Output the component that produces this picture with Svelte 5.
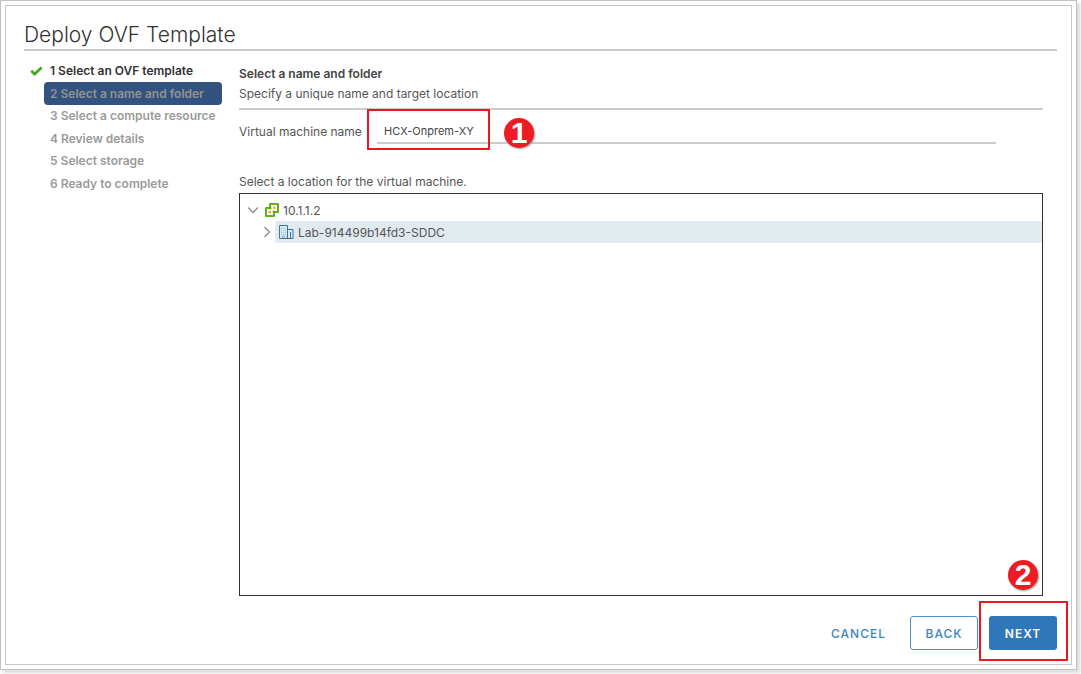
<script lang="ts">
  type Step = { label: string; state: 'done' | 'current' | 'todo' };

  const steps: Step[] = [
    { label: '1 Select an OVF template', state: 'done' },
    { label: '2 Select a name and folder', state: 'current' },
    { label: '3 Select a compute resource', state: 'todo' },
    { label: '4 Review details', state: 'todo' },
    { label: '5 Select storage', state: 'todo' },
    { label: '6 Ready to complete', state: 'todo' },
  ];

  let vmName = $state('HCX-Onprem-XY');
</script>

<div class="frame">
  <div class="wizard">
    <h1>Deploy OVF Template</h1>

    <div class="body">
      <ol class="steps">
        {#each steps as step}
          <li class={step.state} aria-current={step.state === 'current' ? 'step' : undefined}>
            <span class="mark">
              {#if step.state === 'done'}
                <svg width="13" height="10" viewBox="0 0 13 10" fill="none" aria-hidden="true">
                  <path d="M1.2 4.8l3.4 3.2 7-6.6" stroke="#48a81c" stroke-width="2.8" />
                </svg>
              {/if}
            </span>
            <span class="step-label">{step.label}</span>
          </li>
        {/each}
      </ol>

      <main>
        <h2>Select a name and folder</h2>
        <p class="subtitle">Specify a unique name and target location</p>

        <div class="name-row">
          <label for="vm-name">Virtual machine name</label>
          <div class="name-field">
            <input id="vm-name" type="text" bind:value={vmName} />
            <span class="highlight"></span>
            <span class="badge">1</span>
          </div>
        </div>

        <p class="location">Select a location for the virtual machine.</p>
        <div class="tree" role="tree">
          <div class="node" role="treeitem" aria-selected="false" aria-expanded="true">
            <button class="caret" aria-label="Collapse">
              <svg width="12" height="8" viewBox="0 0 12 8" fill="none">
                <path d="M1 1.5l5 5 5-5" stroke="#8c8c8c" stroke-width="1.3" />
              </svg>
            </button>
            <div class="node-label">
              <svg width="14" height="14" viewBox="0 0 14 14" fill="none" aria-hidden="true">
                <path d="M5 1h8v8H9v4H1V5h4z" fill="#fff" stroke="#62b01e" stroke-width="2" stroke-linejoin="round" />
                <path d="M5 5v1.500M5 5h1.500M9 9V7.500M9 9H7.500" stroke="#62b01e" stroke-width="1.500" />
                <path d="M8 3.500h2.500V6H8zM3.500 8H6v2.500H3.500z" fill="#f7a928" />
              </svg>
              <span>10.1.1.2</span>
            </div>
          </div>
          <div class="node child" role="treeitem" aria-selected="true" aria-expanded="false">
            <button class="caret" aria-label="Expand">
              <svg width="8" height="12" viewBox="0 0 8 12" fill="none">
                <path d="M1.500 1l5 5-5 5" stroke="#8c8c8c" stroke-width="1.3" />
              </svg>
            </button>
            <div class="node-label selected">
              <svg width="15" height="14" viewBox="0 0 15 14" fill="none" aria-hidden="true">
                <path d="M.5 13.500V.5h8v13M8.500 4.500h5.500v9H.5" fill="#dbe7ee" stroke="#39749c" />
                <path d="M2 3.500h5.500M2 5.500h5.500M2 7.500h5.500M2 9.500h5.500" stroke="#a9c3d3" stroke-dasharray="1 1" />
                <path d="M3.500 13v-2h2v2" stroke="#8fb1c6" />
                <path d="M11.500 7v6.500" stroke="#39749c" />
              </svg>
              <span>Lab-914499b14fd3-SDDC</span>
            </div>
          </div>
        </div>
      </main>
    </div>

    <footer>
      <button class="btn link">CANCEL</button>
      <button class="btn outline">BACK</button>
      <div class="next">
        <button class="btn primary">NEXT</button>
        <span class="highlight"></span>
        <span class="badge">2</span>
      </div>
    </footer>
  </div>
</div>

<style>
  :global(body) {
    margin: 0;
    background: #fff;
  }

  .frame {
    box-sizing: border-box;
    display: flex;
    min-height: calc(100vh - 4px);
    margin: 0 4px 4px 0;
    padding: 4px;
    border: 1px solid #c2c2c2;
    box-shadow: 3px 3px 3px #ddd;
    font-family: Inter, 'Open Sans', sans-serif;
    font-size: 12px;
    color: #565656;
  }

  .wizard {
    flex: 1;
    display: flex;
    flex-direction: column;
    padding: 14px 14px 14px 18px;
    border: 1px solid #c8c8c8;
  }

  h1 {
    margin: 0;
    border-bottom: 2px solid #ccc;
    font-size: 21px;
    font-weight: 300;
    line-height: 29px;
    color: #333;
  }

  .body {
    flex: 1;
    display: flex;
    gap: 17px;
    padding-right: 14px;
  }

  .steps {
    flex: none;
    width: 198px;
    margin: 0;
    padding: 9px 0 0;
    list-style: none;
    font-weight: 600;
    color: #9a9a9a;
  }

  .steps li {
    display: flex;
    align-items: center;
    height: 22px;
  }

  .steps li:nth-child(even) {
    height: 23px;
  }

  .mark {
    display: flex;
    width: 14px;
    padding-left: 6px;
  }

  .step-label {
    flex: 1;
    padding-left: 6px;
    line-height: 22px;
    white-space: nowrap;
  }

  .done .step-label {
    color: #333;
  }

  .current .step-label {
    border-radius: 4px;
    background: #32537f;
    line-height: 23px;
    color: #929292;
  }

  main {
    flex: 1;
    display: flex;
    flex-direction: column;
    min-width: 0;
  }

  h2 {
    margin: 13px 0 0;
    font-size: 12px;
    font-weight: 600;
    line-height: 20px;
    color: #444;
  }

  .subtitle {
    margin: 0;
    padding-bottom: 4px;
    border-bottom: 2px solid #ccc;
    line-height: 20px;
  }

  .name-row {
    display: flex;
    align-items: center;
    padding: 10px 47px 0 0;
  }

  .name-row label {
    width: 138px;
    line-height: 24px;
  }

  .name-field {
    position: relative;
    flex: 1;
  }

  input {
    display: block;
    box-sizing: border-box;
    width: 100%;
    height: 24px;
    padding: 0 7px;
    border: 0;
    border-bottom: 2px solid #ccc;
    outline: none;
    background: transparent;
    font: inherit;
    font-size: 11px;
    color: #444;
  }

  .location {
    margin: 28px 0 1px;
    line-height: 20px;
  }

  .tree {
    flex: 1;
    border: 1px solid #333;
    padding-top: 5px;
  }

  .node {
    display: flex;
    align-items: center;
    height: 22px;
    padding-left: 5px;
  }

  .node.child {
    padding-left: 19px;
  }

  .caret {
    display: flex;
    align-items: center;
    justify-content: center;
    width: 16px;
    height: 22px;
    padding: 0;
    border: 0;
    background: none;
  }

  .node-label {
    flex: 1;
    display: flex;
    align-items: center;
    gap: 4px;
    height: 22px;
    padding-left: 4px;
  }

  .node-label.selected {
    border-radius: 3px 0 0 3px;
    background: #e1eaef;
  }

  footer {
    display: flex;
    justify-content: flex-end;
    gap: 11px;
    padding-top: 20px;
  }

  .btn {
    box-sizing: border-box;
    height: 34px;
    min-width: 68px;
    padding: 0 12px;
    border: 1px solid transparent;
    border-radius: 3px;
    background: none;
    font: 500 12px Inter, 'Open Sans', sans-serif;
    letter-spacing: 1px;
    color: #3a87be;
  }

  .outline {
    border-color: #4a94c8;
  }

  .primary {
    background: #3077b9;
    color: #fff;
    font-weight: 600;
  }

  .next {
    position: relative;
  }

  /* callouts drawn over the controls */
  .highlight {
    position: absolute;
    inset: -15px -11px -11px -10px;
    border: 2px solid #ee1420;
    pointer-events: none;
  }

  .name-field .highlight {
    inset: -11px auto -6px -10px;
    width: 119px;
  }

  .badge {
    position: absolute;
    top: -56px;
    left: 19px;
    width: 30px;
    height: 30px;
    border-radius: 50%;
    background: #ed1c24;
    box-shadow: 1px 1px 2px #999;
    font: bold 30px/30px 'Liberation Sans', sans-serif;
    text-align: center;
    color: #fff;
    pointer-events: none;
  }

  .name-field .badge {
    top: -2px;
    left: 127px;
  }
</style>
